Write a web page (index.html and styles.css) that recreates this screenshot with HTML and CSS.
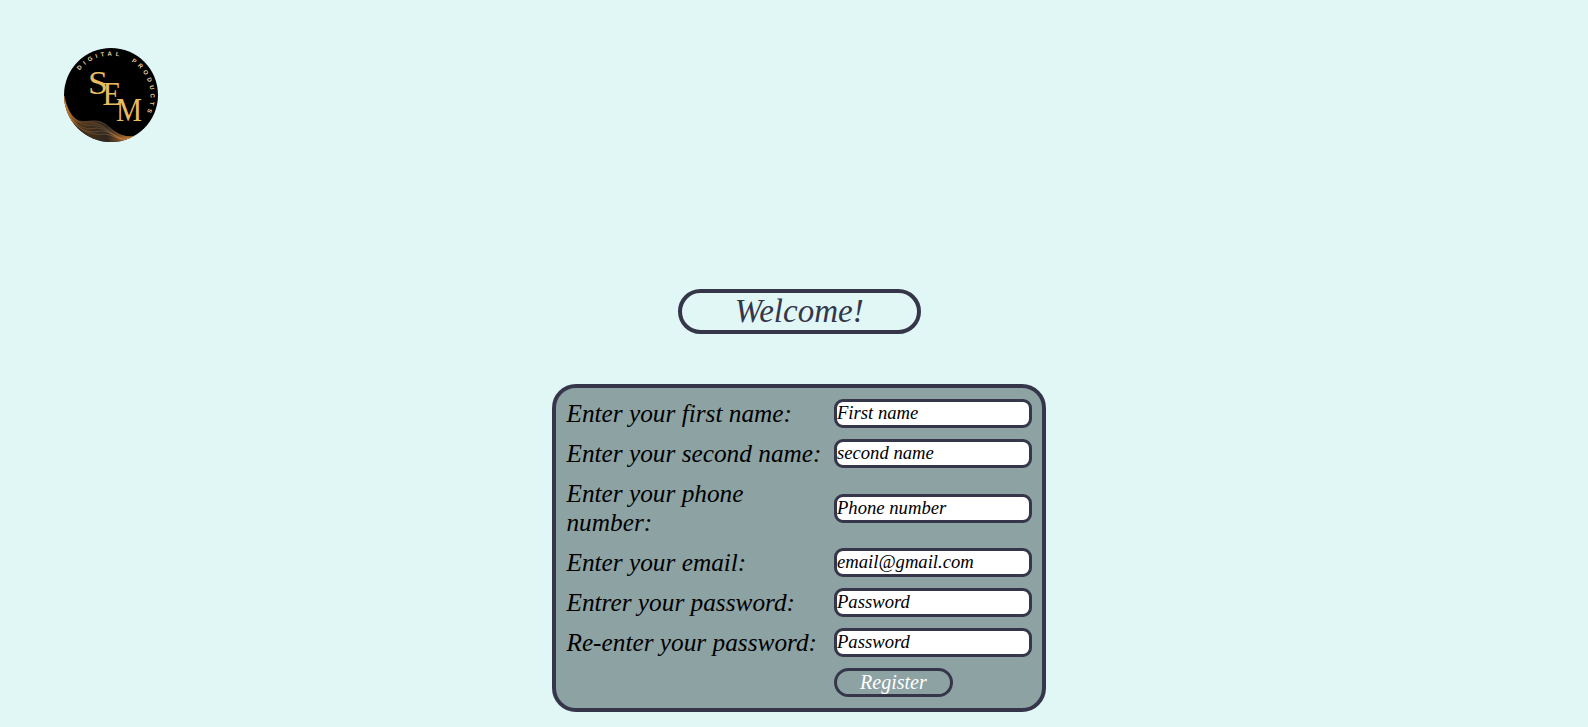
FILE: index.html
```html
<!DOCTYPE html>
<html lang="en">
<head>
<meta charset="utf-8">
<title>Register</title>
<link rel="stylesheet" href="styles.css">
</head>
<body>
<header class="header">
  <svg class="logo" viewBox="0 0 94 94" role="img" aria-label="SEM Digital Products">
    <defs>
      <clipPath id="disc"><circle cx="47" cy="47" r="47"/></clipPath>
      <path id="ring" d="M15.500 22.400A40 40 0 0 1 79.500 70.300"/>
      <linearGradient id="gold" x1="0" x2="1" y1="0" y2="0">
        <stop offset="0" stop-color="#e08a2c"/><stop offset=".22" stop-color="#80592f"/><stop offset=".65" stop-color="#755f46"/><stop offset="1" stop-color="#e58a32"/>
      </linearGradient>
      <linearGradient id="fill" x1="0" x2="1" y1="0" y2="0">
        <stop offset="0" stop-color="#ce7622"/><stop offset=".2" stop-color="#4a3018"/><stop offset=".6" stop-color="#30271f"/><stop offset="1" stop-color="#e58a32"/>
      </linearGradient>
    </defs>
    <g clip-path="url(#disc)">
      <rect class="logo-back" width="94" height="94"/>
      <path fill="url(#fill)" d="M0 48C3 62 8 70 15 73C25 75 31 70 41 76C50 83 57 91 72 88L64 94H0Z"/>
      <g class="waves" stroke="url(#gold)">
        <path d="M0 48C3 62 8 70 15 73C25 75 31 70 41 76C50 83 57 91 72 88"/>
        <path d="M0 52C5 68 12 75 22 75C34 73 42 80 48 85S61 92 72 89"/>
        <path d="M0 55C7 72 17 79 27 77C38 77 45 84 52 88S64 91 72 89"/>
        <path d="M0 58C9 77 20 83 32 80C42 80 48 87 55 90S66 91 72 89"/>
        <path d="M1 61C12 82 25 86 36 83C46 83 52 89 58 91"/>
        <path d="M5 68C18 87 31 87 41 86C49 87 54 91 60 92"/>
      </g>
      <text class="ring-text"><textPath href="#ring" textLength="115">DIGITAL&#160; PRODUCTS</textPath></text>
      <g class="monogram">
        <text x="24" y="45.500" font-size="33" textLength="20" lengthAdjust="spacingAndGlyphs">S</text>
        <text x="38.500" y="57" font-size="34" textLength="19" lengthAdjust="spacingAndGlyphs">E</text>
        <text x="52" y="72.500" font-size="34" textLength="26" lengthAdjust="spacingAndGlyphs">M</text>
      </g>
    </g>
  </svg>
</header>
<main class="main">
  <h1 class="welcome">Welcome!</h1>
  <form class="panel">
    <label class="label" for="first">Enter your first name:</label>
    <input class="field" id="first" type="text" placeholder="First name">
    <label class="label" for="second">Enter your second name:</label>
    <input class="field" id="second" type="text" placeholder="second name">
    <label class="label" for="phone">Enter your phone number:</label>
    <input class="field" id="phone" type="tel" placeholder="Phone number">
    <label class="label" for="email">Enter your email:</label>
    <input class="field" id="email" type="email" placeholder="email@gmail.com">
    <label class="label" for="pass">Entrer your password:</label>
    <input class="field" id="pass" type="password" placeholder="Password">
    <label class="label" for="repeat">Re-enter your password:</label>
    <input class="field" id="repeat" type="password" placeholder="Password">
    <button class="register" type="button">Register</button>
  </form>
</main>
</body>
</html>
```
FILE: styles.css
```css
* { box-sizing: border-box; }
body {
  margin: 0;
  min-height: 727px;
  background: #e0f7f5;
  color: #000;
  font-family: "Liberation Serif", "Times New Roman", serif;
  font-style: italic;
}
.header { height: 289px; padding: 48px 0 0 64px; }
.logo { display: block; width: 94px; height: 94px; }
.logo-back { fill: #000; }
.waves { fill: none; stroke-width: .6; }
.ring-text { fill: #e5d3a0; font: bold 6px "Liberation Sans", sans-serif; }
.monogram { fill: #e8bd5f; font-family: "Liberation Serif", serif; font-style: normal; }
.main { display: flex; flex-direction: column; align-items: center; padding-left: 10.400px; }
.welcome {
  width: 243px;
  height: 45px;
  margin: 0 0 50px;
  border: 4px solid #35364a;
  border-radius: 23px;
  color: #35364a;
  font-size: 33px;
  font-weight: 400;
  line-height: 37px;
  text-align: center;
}
.panel {
  display: grid;
  grid-template-columns: 258px 198px;
  column-gap: 9.500px;
  row-gap: 11px;
  align-items: center;
  width: 494.500px;
  padding: 11px 10px 11px 10.500px;
  border: 4px solid #35364a;
  border-radius: 24px;
  background: #8da2a3;
}
.label { font-size: 25.300px; line-height: 29px; }
.field {
  width: 198px;
  height: 29px;
  padding: 0 0 1px;
  border: 3px solid #35364a;
  border-radius: 9px;
  background: #fff;
  font: italic 18.670px "Liberation Serif", "Times New Roman", serif;
}
.field::placeholder { color: #000; opacity: 1; }
.register {
  grid-column: 2;
  justify-self: start;
  width: 119px;
  height: 29px;
  padding: 0;
  border: 3px solid #35364a;
  border-radius: 15px;
  background: transparent;
  color: #fff;
  font: italic 20px/23px "Liberation Serif", "Times New Roman", serif;
}
```
